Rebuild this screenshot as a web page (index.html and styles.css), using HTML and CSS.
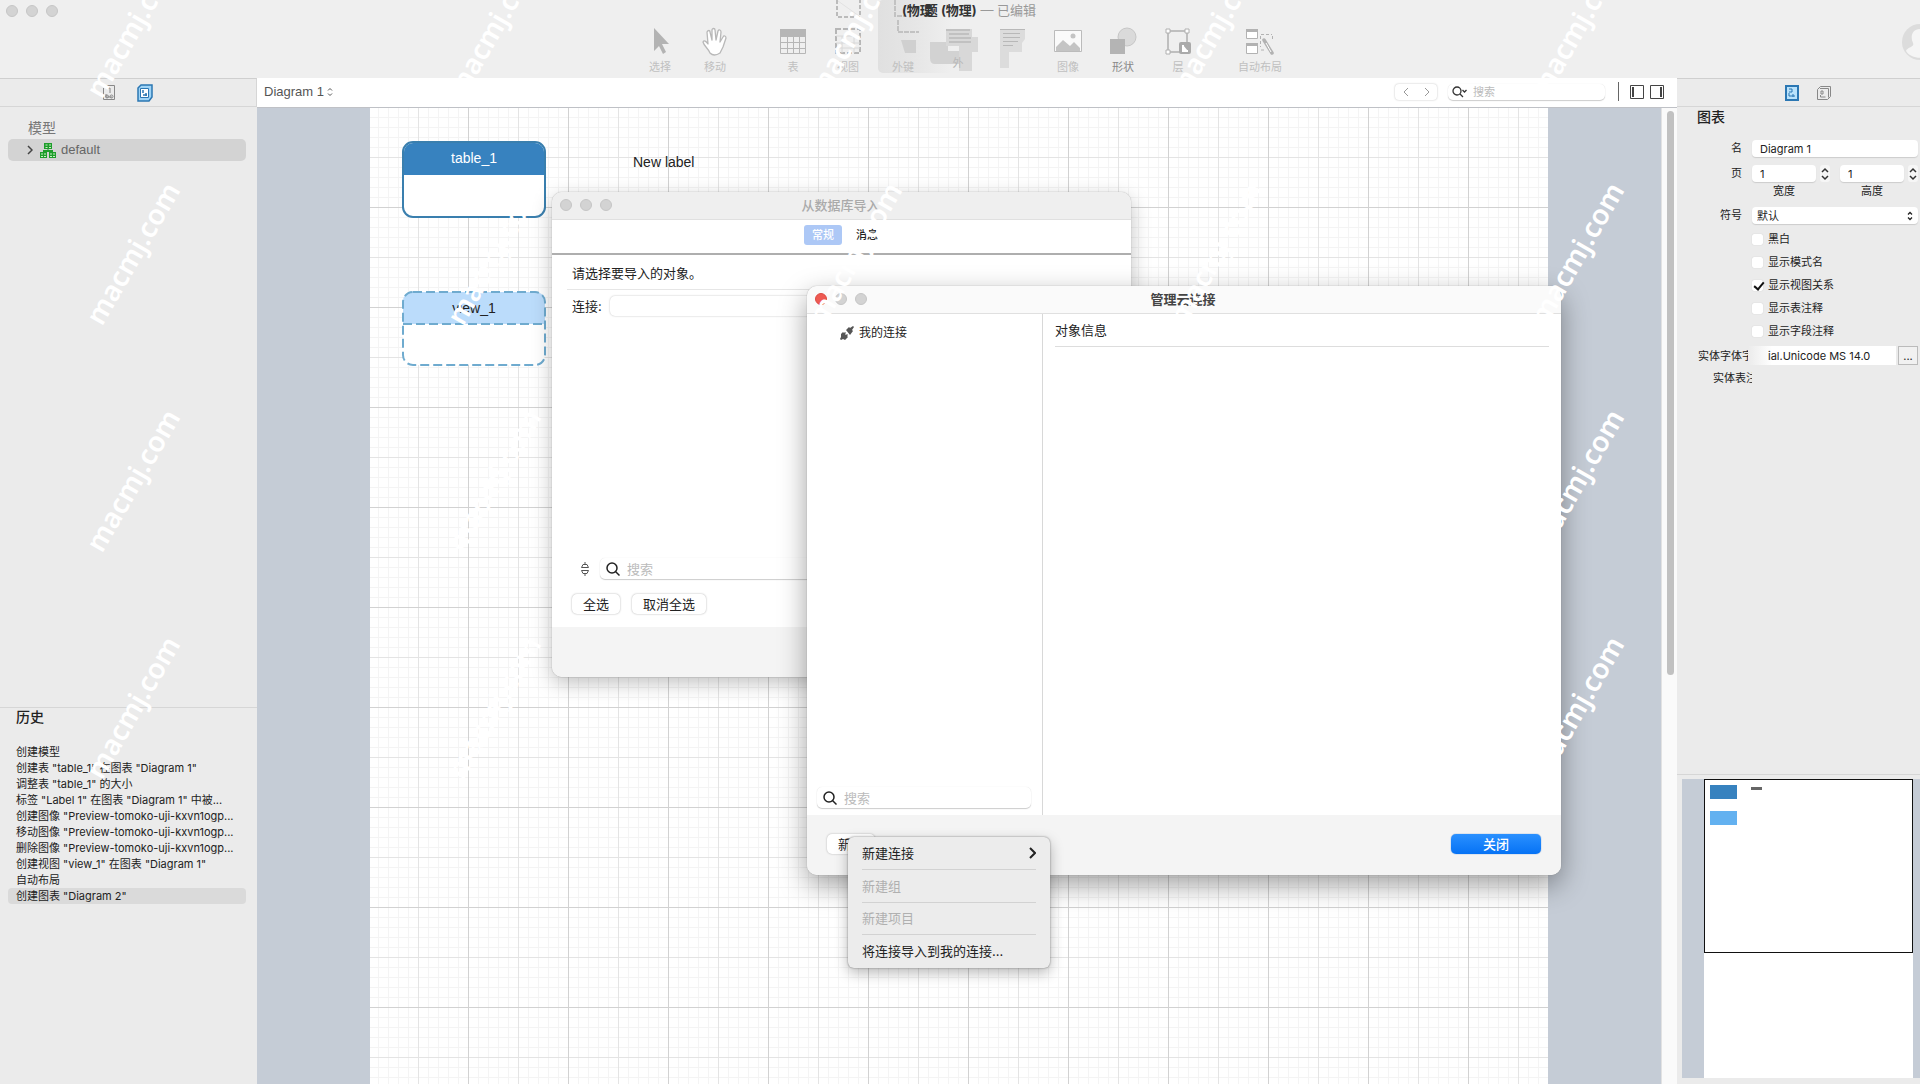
FILE: index.html
```html
<!DOCTYPE html>
<html lang="zh-CN">
<head>
<meta charset="utf-8">
<title>模型 (物理)</title>
<link rel="stylesheet" href="styles.css">
</head>
<body>
<div class="app">
  <header class="topbar">
    <div class="lights"><i></i><i></i><i></i></div>
    <svg class="ghost" width="210" height="78" viewBox="830 0 210 78">
      <defs><linearGradient id="fade"><stop offset="0" stop-color="#e0e0e0"/><stop offset=".5" stop-color="#e6e6e6"/><stop offset="1" stop-color="#efefef"/></linearGradient></defs>
      <rect x="878" y="0" width="74" height="73" rx="5" fill="url(#fade)"/>
      <path d="M837 0v17h23V0" fill="none" stroke="#bbb" stroke-width="2" stroke-dasharray="4 2"/>
      <path d="M838 1l21 15" stroke="#e2e2e2"/>
      <path d="M895 0v16h10M898 20v12h21" fill="none" stroke="#c2c2c2" stroke-width="2" stroke-dasharray="5 1"/>
      <path d="M901 40h15v13h-11z" fill="#d0d0d0"/>
      <path d="M930 42h18v9h15v13h-28q-5 0-5-6z" fill="#d2d2d2"/>
      <path d="M946 29h26v8h6v15h-6v19h-13V46h-13z" fill="#d8d8d8"/>
      <path d="M946 30h24M949 34h20M949 38h22M949 42h22" stroke="#aaa"/>
    </svg>
    <h1 class="title"><b>(物<span class="over">理</span>题 (物理)</b> — 已编辑</h1>
    <nav class="tools">
      <button><svg viewBox="0 0 28 28"><path d="M8 1v23l5-5 4 8 3-2-4-8h7z" fill="#b3b3b3"/></svg>选择</button>
      <button><svg viewBox="0 0 28 28" fill="#fff" stroke="#b8b8b8" stroke-width="1.3" stroke-linejoin="round"><path d="M9 26C7 21 3 19 2 15c1-2 3-1 5 2L6 5c1-2 3-2 3 0l2 8V3c0-2 3-2 3 0l1 10 2-9c1-2 3-1 3 1l-1 10 3-5c1-2 3-1 3 1l-3 9-3 6q-6 4-10 0z"/></svg>移动</button>
      <span class="gap"></span>
      <button><svg viewBox="0 0 28 28"><path d="M1 2h26v7H1z" fill="#b6b6b6"/><path d="M1.500 2.500h25v24h-25zM1.500 9.500h25M1.500 15.500h25M1.500 21.500h25M8.500 9v18M14.500 9v18M20.500 9v18" fill="none" stroke="#b6b6b6"/></svg>表</button>
      <button><svg viewBox="0 0 28 28" fill="none" stroke="#b6b6b6"><path d="M2 2h24v24H2z" stroke-width="2" stroke-dasharray="5 2"/><path d="M2 9h24M8 9v17M20 9v17M2 16h24M2 21h24" stroke="#d8d8d8"/></svg>视图</button>
      <button><svg viewBox="0 0 28 28"></svg>外键</button>
      <button class="raised"><svg viewBox="0 0 28 28"></svg>外</button>
      <button><svg viewBox="0 0 28 28"><path d="M1 2h25v10l-3 4v9H10v16H1z" fill="#dcdcdc"/><path d="M1 2.500h25M4 6.500h17M4 10.500h17M4 14.500h15M4 18.500h10" stroke="#b8b8b8"/></svg><span>&nbsp;</span></button>
      <button><svg viewBox="0 0 28 28"><path d="M.500 3.500h27v21H.500z" fill="#fafafa" stroke="#bbb"/><path d="M2 24v-4l7-7 7 6 4-4 6 6v3z" fill="#c4c4c4"/><circle cx="19" cy="9" r="2.500" fill="#c4c4c4"/></svg>图像</button>
      <button class="strong"><svg viewBox="0 0 28 28"><circle cx="18" cy="10" r="9" fill="#dadada" stroke="#c6c6c6"/><path d="M1 12h15v15H1z" fill="#b4b4b4"/></svg>形状</button>
      <button><svg viewBox="0 0 28 28" fill="#fff" stroke="#b0b0b0"><path d="M4 4h19v21H4z" fill="none" stroke-width="1.500"/><path d="M2 2h4v4H2zM21 2h4v4h-4zM2 23h4v4H2z"/><rect x="15" y="15" width="12" height="12" rx="2" fill="#aaa" stroke="none"/><path d="M19 18v6h5" stroke="#fff" stroke-width="2"/></svg>层</button>
      <span class="gap wide"></span>
      <button><svg viewBox="0 0 28 28" fill="none" stroke="#b2b2b2"><path d="M.500 2.500h11v9H.500zM.500 16.500h11v10H.500z" fill="#fff"/><path d="M0 3.500h12M0 17.500h12" stroke-width="3"/><path d="M15 7.500h11M14.500 9v11M26.500 9v5M15 23h4" stroke-dasharray="3 2"/><path d="M18 13l8 13" stroke-width="3.500" stroke-linecap="round"/><path d="M20 16l5 9" stroke="#fff"/></svg>自动布局</button>
    </nav>
    <svg class="avatar" width="36" height="36" viewBox="0 0 36 36"><circle cx="18" cy="18" r="18" fill="#dcdcdc"/><path d="M18 5c8 0 9 8 6 14-2 4 8 3 8 8-5 9-23 9-28 0 1-4 9-4 7-8-3-6-1-14 7-14z" fill="#f5f5f5"/></svg>
  </header>

  <aside class="side left">
    <div class="tabs">
      <button aria-label="模型"><svg width="16" height="18" viewBox="0 0 16 18" fill="none" stroke="#888"><path d="M4 1.500h9.500v14h-11V4M6 4h3v5M5 10v3h6"/><circle cx="6" cy="12.500" r="1.500"/><circle cx="10.500" cy="12.500" r="1.500"/></svg></button>
      <button aria-label="图表"><svg width="16" height="18" viewBox="0 0 16 18"><path d="M1 4l3-3h11v12l-3 4H1z" fill="#9fd4f7" stroke="#2b77b3" stroke-width="1.500"/><path d="M3.500 4.500h8v9h-8z" fill="#fff" stroke="#2b77b3"/><path d="M6 6v3M6 11h4M9 9v3" stroke="#2b77b3" stroke-width="1.500"/></svg></button>
    </div>
    <section class="models">
      <h2>模型</h2>
      <a href="#" class="tree"><svg width="6" height="10" viewBox="0 0 6 10"><path d="M1 1l4 4-4 4" fill="none" stroke="#444" stroke-width="1.500"/></svg><svg width="16" height="15" viewBox="0 0 16 15"><path d="M4 0h8v6H4zM0 9h7v6H0zM9 9h7v6H9zM7.500 6h1v2h-1zM3 7h10v2H3z" fill="#1f9d2c"/><path d="M5.500 2h2M9 2h2M5.500 4.500h2M9 4.500h2M1 11h2M4 11h2M1 13.500h2M4 13.500h2M10 11h2M13 11h2M10 13.500h2M13 13.500h2" stroke="#c9f2c4"/></svg>default</a>
    </section>
    <section class="history">
      <h2>历史</h2>
      <ul>
        <li>创建模型</li>
        <li>创建表 "table_1" 在图表 "Diagram 1"</li>
        <li>调整表 "table_1" 的大小</li>
        <li>标签 "Label 1" 在图表 "Diagram 1" 中被...</li>
        <li>创建图像 "Preview-tomoko-uji-kxvn1ogp...</li>
        <li>移动图像 "Preview-tomoko-uji-kxvn1ogp...</li>
        <li>删除图像 "Preview-tomoko-uji-kxvn1ogp...</li>
        <li>创建视图 "view_1" 在图表 "Diagram 1"</li>
        <li>自动布局</li>
        <li class="on">创建图表 "Diagram 2"</li>
      </ul>
    </section>
  </aside>

  <main class="center">
    <div class="diagrambar">
      <button class="pick">Diagram 1<svg width="6" height="10" viewBox="0 0 6 10"><path d="M1 3.500L3 1.500l2 2M1 6.500l2 2 2-2" fill="none" stroke="#555"/></svg></button>
      <div class="barright">
        <div class="arrows"><button aria-label="后退"><svg width="6" height="10" viewBox="0 0 6 10"><path d="M5 1L1 5l4 4" fill="none" stroke="#999"/></svg></button><button aria-label="前进"><svg width="6" height="10" viewBox="0 0 6 10"><path d="M1 1l4 4-4 4" fill="none" stroke="#999"/></svg></button></div>
        <label class="find small"><svg width="16" height="12" viewBox="0 0 16 12" fill="none" stroke="#333" stroke-width="1.300"><circle cx="5" cy="5" r="4"/><path d="M8 8l3 3M10.500 4l2 2 2-2"/></svg><input type="text" placeholder="搜索" aria-label="搜索"></label>
        <i class="rule"></i>
        <button aria-label="左侧栏"><svg width="14" height="14" viewBox="0 0 14 14"><path d="M.500.500h13v13H.500z" fill="none" stroke="#444"/><path d="M3 2v10" stroke="#444" stroke-width="2"/></svg></button>
        <button aria-label="右侧栏"><svg width="14" height="14" viewBox="0 0 14 14"><path d="M.500.500h13v13H.500z" fill="none" stroke="#444"/><path d="M11 2v10" stroke="#444" stroke-width="2"/></svg></button>
      </div>
    </div>
    <div class="canvas">
      <div class="sheetwrap"><div class="sheet">
        <div class="entity table"><div class="ename">table_1</div></div>
        <div class="entity view"><svg width="144" height="75" viewBox="0 0 144 75"><rect x="1" y="1" width="142" height="73" rx="10" fill="#fff"/><path d="M1 33V11Q1 1 11 1h122q10 0 10 10v22z" fill="#bbdcfb"/><rect x="1" y="1" width="142" height="73" rx="10" fill="none" stroke="#6fabcf" stroke-width="2" stroke-dasharray="9 4"/><path d="M1 33h142" stroke="#6fabcf" stroke-width="2" stroke-dasharray="9 4"/></svg><div class="ename">view_1</div></div>
        <div class="note">New label</div>
      </div></div>
      <div class="scroll"><i></i></div>
    </div>
  </main>

  <aside class="side right">
    <div class="tabs">
      <button aria-label="图表属性"><svg width="16" height="16" viewBox="0 0 16 16"><path d="M2 1h12v14H2z" fill="#b9e2fb" stroke="#2b77b3" stroke-width="2"/><path d="M5 4h3v3H5M5 8v3h6M9 9v3" fill="none" stroke="#2b77b3"/></svg></button>
      <button aria-label="图层"><svg width="16" height="16" viewBox="0 0 16 16" fill="none" stroke="#888"><path d="M1.500 4.500l3-3h10v10l-3 3h-10zM4 3.500h8.500v9M5 6h2v3H5zM4.500 10v2h5"/></svg></button>
    </div>
    <h2>图表</h2>
    <div class="form">
      <label for="nm">名</label><input id="nm" class="box" type="text" value="Diagram 1">
      <label for="pw">页</label>
      <div class="pair">
        <div class="dim"><div><input id="pw" class="box" type="text" value="1"><button class="step" aria-label="调整宽度"><svg width="8" height="14" viewBox="0 0 8 14"><path d="M1 5l3-3 3 3M1 9l3 3 3-3" fill="none" stroke="#333" stroke-width="1.500"/></svg></button></div><label for="pw">宽度</label></div>
        <div class="dim"><div><input id="ph" class="box" type="text" value="1"><button class="step" aria-label="调整高度"><svg width="8" height="14" viewBox="0 0 8 14"><path d="M1 5l3-3 3 3M1 9l3 3 3-3" fill="none" stroke="#333" stroke-width="1.500"/></svg></button></div><label for="ph">高度</label></div>
      </div>
      <label for="nt">符号</label>
      <div class="selectwrap"><select id="nt" class="box"><option>默认</option></select><svg width="6" height="10" viewBox="0 0 6 10"><path d="M1 3.500L3 1.500l2 2M1 6.500l2 2 2-2" fill="none" stroke="#222" stroke-width="1.300"/></svg></div>
      <div class="checks">
        <label><input type="checkbox">黑白</label>
        <label><input type="checkbox">显示模式名</label>
        <label><input type="checkbox" checked>显示视图关系</label>
        <label><input type="checkbox">显示表注释</label>
        <label><input type="checkbox">显示字段注释</label>
      </div>
    </div>
    <div class="fontrow"><label for="ft">实体字体字</label><input id="ft" type="text" value="ial.Unicode MS 14.0"><button>...</button></div>
    <div class="fontnote">实体表注</div>
    <div class="navigator"><div class="navpage"><div class="navview"><i class="n1"></i><i class="n2"></i><i class="n3"></i></div></div></div>
  </aside>

  <section class="window import">
    <header><div class="lights"><i></i><i></i><i></i></div><h3>从数据库导入</h3></header>
    <div class="wtabs"><button class="on">常规</button><button>消息</button></div>
    <div class="wbody">
      <p>请选择要导入的对象。</p>
      <div class="conn"><label for="cn">连接:</label><input id="cn" type="text"></div>
      <div class="searchrow"><svg width="10" height="16" viewBox="0 0 10 16" fill="none" stroke="#555"><path d="M1.500 6.500h7L7 3.500H3zM1.500 9.500h7L7 12.500H3zM5 1v2M5 13v2"/></svg><label class="find"><svg width="14" height="14" viewBox="0 0 14 14" fill="none" stroke="#222" stroke-width="1.500"><circle cx="6" cy="6" r="5"/><path d="M9.500 9.500l4 4"/></svg><input type="text" placeholder="搜索" aria-label="搜索对象"></label></div>
      <div class="btns"><button class="btn">全选</button><button class="btn">取消全选</button></div>
    </div>
    <footer></footer>
  </section>

  <section class="window manage">
    <header><div class="lights live"><i></i><i></i><i></i></div><h3>管理云连接</h3></header>
    <div class="split">
      <div class="conns">
        <a href="#"><svg width="14" height="14" viewBox="0 0 14 14"><path d="M6 4l3-3 1 1 3-2 1 1-2 3 1 1-3 4zM1 8l2-2 1 1 1-1 1 1-1 1 1 1 1-1 1 1-1 1 1 1-3 3-2-1-2 1-1-1 1-2z" fill="#555"/></svg>我的连接</a>
        <label class="find"><svg width="14" height="14" viewBox="0 0 14 14" fill="none" stroke="#222" stroke-width="1.500"><circle cx="6" cy="6" r="5"/><path d="M9.500 9.500l4 4"/></svg><input type="text" placeholder="搜索" aria-label="搜索连接"></label>
      </div>
      <div class="info"><h4>对象信息</h4></div>
    </div>
    <footer><div class="anchor"><button class="btn">新建</button>
      <div class="menu">
        <button>新建连接<svg width="7" height="12" viewBox="0 0 7 12"><path d="M1 1l5 5-5 5" fill="none" stroke="#222" stroke-width="2"/></svg></button>
        <button disabled>新建组</button>
        <button disabled>新建项目</button>
        <button>将连接导入到我的连接...</button>
      </div></div>
      <button class="btn primary">关闭</button></footer>
  </section>

  <div class="marks" aria-hidden="true">
    <span>macmj.com</span><span>macmj.com</span><span>macmj.com</span><span>macmj.com</span><span>macmj.com</span>
    <span>macmj.com</span><span>macmj.com</span><span>macmj.com</span><span>macmj.com</span><span>macmj.com</span>
    <span>macmj.com</span><span>macmj.com</span><span>macmj.com</span><span>macmj.com</span><span>macmj.com</span>
    <span>macmj.com</span><span>macmj.com</span><span>macmj.com</span><span>macmj.com</span><span>macmj.com</span>
  </div>
</div>
</body>
</html>
```
FILE: styles.css
```css
* { box-sizing: border-box; margin: 0; padding: 0; }
body { font-family: Inter, "Noto Sans CJK SC", sans-serif; font-size: 13px; line-height: 16px; color: #222; background: #ebebeb; }
button, input, select { font: inherit; color: inherit; border: 0; background: none; outline: 0; min-width: 0; }
a { color: inherit; text-decoration: none; }
svg { flex: none; }
ul { list-style: none; }
.app { position: relative; height: 100vh; overflow: hidden; display: grid; grid-template-columns: 257px minmax(0, 1fr) 243px; grid-template-rows: 78px minmax(0, 1fr); }

.topbar { position: relative; grid-column: 1 / -1; background: #efefef; display: flex; flex-direction: column; align-items: center; overflow: hidden; }
.lights { display: flex; gap: 8px; }
.lights i { width: 12px; height: 12px; border-radius: 50%; background: #d3d3d3; border: 1px solid #c6c6c6; }
.lights.live i:first-child { background: #ee5a52; border-color: #dd4a42; }
.topbar .lights { position: absolute; left: 6px; top: 5px; }
.ghost { position: absolute; top: 0; left: calc(50% - 130px); }
.title { position: relative; font-size: 13px; font-weight: 400; line-height: 20px; height: 27px; color: #999; padding-left: 18px; }
.title b { color: #333; }
.over { margin-right: -8px; }
.tools { position: relative; display: flex; justify-content: center; }
.tools button { width: 55px; display: flex; flex-direction: column; align-items: center; gap: 4px; font-size: 11px; line-height: 16px; color: #c0c0c0; white-space: nowrap; }
.tools svg { width: 28px; height: 28px; overflow: visible; }
.tools .strong { color: #888; }
.tools .raised { color: #b8b8b8; gap: 0; }
.gap { width: 23px; }
.gap.wide { width: 27px; }
.avatar { position: absolute; left: calc(100% - 18px); top: 24px; }

.side { background: #ebebeb; display: flex; flex-direction: column; min-height: 0; overflow: hidden; }
.tabs { flex: none; height: 29px; border-top: 1px solid #cfcfcf; border-bottom: 1px solid #d6d6d6; display: flex; justify-content: center; align-items: center; gap: 20px; }
.tabs button { display: flex; }
.side.left .tabs { border-right: 1px solid #d6d6d6; padding-right: 2px; }
.side h2 { font-size: 14px; font-weight: 400; line-height: 20px; }
.models { flex: 1; padding: 11px 11px 0 8px; }
.models h2 { padding-left: 20px; color: #777; }
.tree { display: flex; align-items: center; height: 22px; margin-top: 1px; border-radius: 5px; background: #d3d3d3; padding-left: 19px; color: #666; font-family: "Liberation Sans", sans-serif; }
.tree svg + svg { margin: 0 5px 0 7px; }
.history { flex: none; height: 377px; border-top: 1px solid #d6d6d6; padding: 0 11px 0 8px; }
.side .history h2 { padding-left: 8px; font-weight: 500; line-height: 18px; }
.history ul { padding-top: 18px; font-size: 11px; }
.history li { padding-left: 8px; border-radius: 4px; line-height: 16px; white-space: nowrap; }
.history .on { background: #dadada; }

.center { display: flex; flex-direction: column; min-width: 0; background: #fff; }
.diagrambar { flex: none; height: 30px; border-bottom: 1px solid #bfc1c6; display: flex; justify-content: space-between; align-items: center; padding: 0 13px 2px 7px; }
.pick { display: flex; align-items: center; gap: 3px; font-family: "Liberation Sans", sans-serif; font-size: 13px; color: #555; }
.barright { display: flex; align-items: center; gap: 6px; }
.barright > button { display: flex; }
.arrows { display: flex; height: 16px; width: 42px; border-radius: 4px; box-shadow: 0 0 2px #bbb; margin-right: 5px; }
.arrows button { flex: 1; display: grid; place-items: center; }
.rule { width: 1px; height: 19px; background: #666; margin: 0 5px 0 7px; }
.find { display: flex; align-items: center; gap: 7px; height: 21px; padding: 0 6px; border-radius: 5px; background: #fff; box-shadow: 0 1px 1px #ccc, 0 0 1px #ddd; }
.find input { flex: 1; }
.find input::placeholder { color: #bbb; opacity: 1; }
.find.small { width: 157px; height: 16px; padding: 0 4px; gap: 5px; font-size: 11px; }
.canvas { flex: 1; display: flex; min-height: 0; }
.sheetwrap { flex: 1; background: #c5ccd6; padding: 0 113px; display: flex; }
.sheet { position: relative; flex: 1; background-color: #fff;
  background-image: linear-gradient(#d2d2d2 1px, transparent 1px), linear-gradient(90deg, #d2d2d2 1px, transparent 1px), linear-gradient(#e4e4e4 1px, transparent 1px), linear-gradient(90deg, #e4e4e4 1px, transparent 1px), linear-gradient(#f4f4f4 1px, transparent 1px), linear-gradient(90deg, #f4f4f4 1px, transparent 1px);
  background-size: 100px 100px, 100px 100px, 50px 50px, 50px 50px, 10px 10px, 10px 10px;
  background-position: 98px 99px; }
.scroll { width: 16px; background: #fafafa; padding: 3px 3px 0 5px; border-left: 1px solid #e2e2e2; }
.scroll i { display: block; height: 58%; border-radius: 4px; background: #c1c1c1; }
.entity { position: absolute; left: 32px; width: 144px; font-family: "Liberation Sans", sans-serif; font-size: 14px; text-align: center; }
.ename { height: 32px; line-height: 34px; }
.table { top: 33px; height: 77px; border: 2px solid #3a7fae; border-radius: 11px; background: #fff; overflow: hidden; }
.table .ename { background: #3782bf; color: #fff; line-height: 30px; }
.view { top: 183px; }
.view svg { position: absolute; left: 0; top: 0; }
.view .ename { position: relative; }
.note { position: absolute; left: 263px; top: 46px; font-family: "Liberation Sans", sans-serif; font-size: 14px; }

.side.right h2 { padding: 0 20px; font-weight: 500; }
.right .tabs { gap: 16px; padding-left: 18px; }
.form { flex: none; display: grid; grid-template-columns: 65px minmax(0, 1fr); column-gap: 10px; row-gap: 8px; padding: 13px 2px 0 0; font-size: 11px; }
.form > label { text-align: right; }
.box { height: 17px; padding: 0 8px; border-radius: 4px; background: #fff; box-shadow: 0 1px 1px #ccc; font-size: 11px; width: 100%; }
.pair { display: flex; gap: 10px; }
.dim { flex: 1; text-align: center; }
.dim > div { display: flex; gap: 4px; height: 17px; margin-bottom: 1px; }
.dim label { padding-right: 14px; }
.step { width: 10px; display: grid; place-items: center; background: #f6f6f6; border-radius: 3px; flex: none; }
.selectwrap { position: relative; }
.selectwrap svg { position: absolute; right: 5px; top: 4px; }
select.box { appearance: none; padding: 0 5px; }
.checks { grid-column: 2; display: flex; flex-direction: column; gap: 7px; margin-top: -1px; }
.checks label { display: flex; align-items: center; gap: 5px; }
.checks input { appearance: none; width: 11px; height: 11px; background: #fff; border-radius: 2px; box-shadow: 0 0 1px #bbb; }
.checks input:checked::after { content: ""; display: block; width: 4px; height: 8px; margin: 0 0 0 4px; border: solid #111; border-width: 0 2px 2px 0; transform: rotate(40deg); }
.fontrow { flex: none; display: flex; height: 19px; align-items: center; margin: 7px 2px 0 21px; font-size: 11px; }
.fontrow label { width: 50px; overflow: hidden; white-space: nowrap; }
.fontrow input { flex: 1; height: 19px; padding-left: 20px; background: linear-gradient(90deg, #ebebeb, #fff 24px); }
.fontrow button { width: 20px; height: 19px; border: 1px solid #bbb; background: #f1f1f1; line-height: 12px; margin-left: 2px; }
.fontnote { flex: 1; padding: 5px 0 0 36px; width: 75px; overflow: hidden; white-space: nowrap; font-size: 11px; }
.navigator { flex: none; height: 310px; border-top: 1px solid #d6d6d6; padding: 4px 0 6px 5px; display: flex; }
.navpage { flex: 1; background: #fff; border: solid #c5ccd6; border-width: 0 7px 0 22px; }
.navview { height: 174px; border: 1px solid #111; position: relative; }
.navview i { position: absolute; }
.n1 { left: 5px; top: 5px; width: 27px; height: 14px; background: #3782bf; }
.n2 { left: 5px; top: 31px; width: 27px; height: 14px; background: #63b1f0; }
.n3 { left: 46px; top: 7px; width: 11px; height: 3px; background: #666; }

.window { position: absolute; display: flex; flex-direction: column; background: #fff; border-radius: 10px; box-shadow: 0 0 1px #777, 0 10px 28px rgba(0, 0, 0, .38); }
.window > header { flex: none; height: 28px; display: flex; align-items: center; padding: 0 8px 2px; border-bottom: 1px solid #e0e0e0; border-radius: 10px 10px 0 0; background: #fafafa; }
.window h3 { flex: 1; text-align: center; font-size: 13px; font-weight: 700; color: #444; padding-right: 54px; }
.window > footer { background: #f4f4f4; border-radius: 0 0 10px 10px; }
.import { left: 552px; top: 192px; width: 579px; height: 485px; box-shadow: 0 0 1px #777, 0 6px 20px rgba(0, 0, 0, .25); }
.import > header { background: #efefef; }
.import h3 { color: #aaa; font-weight: 500; }
.wtabs { height: 35px; border-bottom: 2px solid #aeaeae; display: flex; justify-content: center; gap: 6px; padding: 5px 0 0 7px; font-size: 11px; }
.wtabs button { width: 38px; height: 20px; border-radius: 3px; font-weight: 500; }
.wtabs .on { background: #adc8f6; color: #fff; }
.wbody { flex: 1; padding: 0 15px; display: flex; flex-direction: column; }
.wbody p { padding: 10px 5px 8px; border-bottom: 1px solid #e6e6e6; }
.conn { display: flex; align-items: center; gap: 8px; padding: 6px 5px; }
.conn input { flex: 1; height: 20px; border-radius: 5px; box-shadow: 0 0 2px #bbb; }
.searchrow { margin-top: auto; display: flex; align-items: center; gap: 10px; padding-left: 13px; }
.searchrow .find { flex: 1; }
.btns { display: flex; gap: 12px; padding: 15px 5px 13px; }
.btn { height: 20px; padding: 0 11px; border-radius: 5px; background: #fff; box-shadow: 0 0 2px #aaa; line-height: 18px; }
.import > footer { height: 50px; }
.manage { left: 807px; top: 286px; width: 754px; height: 589px; }
.split { flex: 1; display: flex; }
.conns { width: 236px; border-right: 1px solid #d8d8d8; display: flex; flex-direction: column; justify-content: space-between; padding: 11px 11px 7px 10px; }
.conns a { display: flex; gap: 5px; align-items: center; padding-left: 23px; font-size: 12px; }
.info { flex: 1; padding: 8px 12px; }
.info h4 { font-weight: 400; border-bottom: 1px solid #ddd; padding-bottom: 8px; }
.manage > footer { height: 60px; display: flex; align-items: flex-start; justify-content: space-between; padding: 19px 20px 0; }
.anchor { position: relative; }
.primary { width: 90px; color: #fff; background: linear-gradient(#2a90ff, #0672f5); box-shadow: 0 0 1px #0558b8; font-weight: 500; }
.menu { position: absolute; left: 21px; top: 3px; width: 202px; height: 131px; padding: 0 14px 1px; border-radius: 6px; background: #ececec; box-shadow: 0 0 2px #777, 0 5px 14px rgba(0, 0, 0, .28); display: flex; flex-direction: column; }
.menu button { flex: 1; display: flex; align-items: center; justify-content: space-between; text-align: left; white-space: nowrap; }
.menu button + button { border-top: 1px solid #d2d2d2; }
.menu button:disabled { color: #b0b0b0; }

.marks { position: absolute; left: -48px; top: -88px; pointer-events: none; display: grid; grid-template-columns: repeat(5, 361px); grid-auto-rows: 227px; place-items: center; color: #fff; font: 600 28px/32px "Noto Sans", sans-serif; }
.marks span { transform: rotate(-60deg); }
```
